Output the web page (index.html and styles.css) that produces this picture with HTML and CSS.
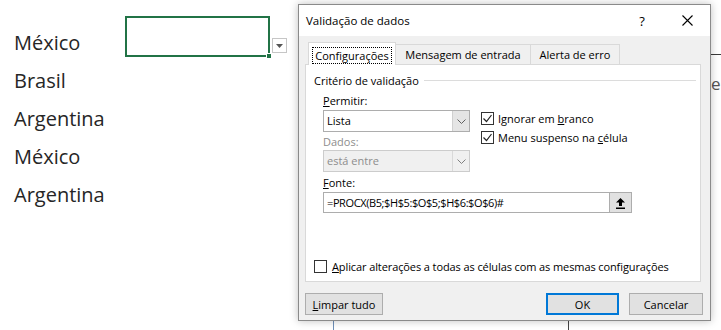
FILE: index.html
```html
<!DOCTYPE html>
<html lang="pt-BR">
<head>
    <meta charset="UTF-8">
    <meta name="viewport" content="width=device-width, initial-scale=1.0">
    <title>Validação de dados</title>
    <link rel="stylesheet" href="styles.css">
</head>
<body>
    <div class="screen">
        <div class="sheet">
            <ul class="names">
                <li>México</li>
                <li>Brasil</li>
                <li>Argentina</li>
                <li>México</li>
                <li>Argentina</li>
            </ul>
            <div class="cell-wrap">
                <div class="cell-active"><span class="fill-handle"></span></div>
                <span class="cell-drop">
                    <svg width="7" height="4" viewBox="0 0 7 4"><polygon points="0,0 7,0 3.5,4" fill="#555"/></svg>
                </span>
            </div>
        </div>

        <!-- bits of the sheet that peek out around the dialog -->
        <div class="behind">
            <span class="rule-h"></span>
            <span class="peek">e</span>
            <span class="rule-v v1"></span>
            <span class="rule-v v2"></span>
        </div>

        <section class="dialog">
            <header class="titlebar">
                <span class="title">Validação de dados</span>
                <span class="help">?</span>
                <span class="close">
                    <svg width="11" height="11" viewBox="0 0 11 11"><path d="M0.5 0.5 L10.5 10.5 M10.5 0.5 L0.5 10.5" stroke="#000" stroke-width="1.1"/></svg>
                </span>
            </header>

            <div class="dialog-body">
                <nav class="tabs">
                    <span class="tab tab-1 active"><span class="focus">Configurações</span></span>
                    <span class="tab tab-2">Mensagem de entrada</span>
                    <span class="tab tab-3">Alerta de erro</span>
                </nav>

                <div class="panel">
                    <div class="group-title"><span>Critério de validação</span></div>

                    <div class="criteria">
                        <div class="col-left">
                            <label class="field-label"><u>P</u>ermitir:</label>
                            <div class="select">
                                <span class="value">Lista</span>
                                <span class="arrow">
                                    <svg width="9" height="5" viewBox="0 0 9 5"><polyline points="0.5,0.5 4.5,4.5 8.5,0.5" fill="none" stroke="#606060"/></svg>
                                </span>
                            </div>
                            <label class="field-label disabled">Dados:</label>
                            <div class="select disabled">
                                <span class="value">está entre</span>
                                <span class="arrow">
                                    <svg width="9" height="5" viewBox="0 0 9 5"><polyline points="0.5,0.5 4.5,4.5 8.5,0.5" fill="none" stroke="#808080"/></svg>
                                </span>
                            </div>
                        </div>
                        <div class="col-right">
                            <div class="check">
                                <span class="box"><svg width="11" height="11" viewBox="0 0 11 11"><polyline points="1.5,5.5 4.5,8.5 9.5,2" fill="none" stroke="#222" stroke-width="1.2"/></svg></span>
                                <span>Ignorar em <u>b</u>ranco</span>
                            </div>
                            <div class="check">
                                <span class="box"><svg width="11" height="11" viewBox="0 0 11 11"><polyline points="1.5,5.5 4.5,8.5 9.5,2" fill="none" stroke="#222" stroke-width="1.2"/></svg></span>
                                <span>Menu suspenso na <u>c</u>élula</span>
                            </div>
                        </div>
                    </div>

                    <label class="field-label source-label"><u>F</u>onte:</label>
                    <div class="source">
                        <span class="value">=PROCX(B5;$H$5:$O$5;$H$6:$O$6)#</span>
                        <span class="pick">
                            <svg width="11" height="12" viewBox="0 0 11 12"><path d="M5.5 1 L10 5.5 H7 V9 H4 V5.5 H1 Z" fill="#000"/><rect x="1" y="10.5" width="9" height="1.5" fill="#000"/></svg>
                        </span>
                    </div>

                    <div class="check apply">
                        <span class="box"></span>
                        <span class="apply-text"><u>A</u>plicar alterações a todas as células com as mesmas configurações</span>
                    </div>
                </div>

                <footer class="buttons">
                    <button class="btn btn-clear"><u>L</u>impar tudo</button>
                    <button class="btn btn-ok">OK</button>
                    <button class="btn btn-cancel">Cancelar</button>
                </footer>
            </div>
        </section>
    </div>
</body>
</html>
```

FILE: styles.css
```css
* {
    box-sizing: border-box;
}

body {
    margin: 0;
    width: 721px;
    height: 330px;
    overflow: hidden;
    background: #fff;
    font-family: "Open Sans", "Noto Sans", sans-serif;
}

.screen {
    position: relative;
    width: 721px;
    height: 330px;
}

/* spreadsheet */

.sheet {
    display: flex;
    align-items: flex-start;
}

.names {
    list-style: none;
    margin: 0;
    padding: 24px 0 0 14px;
    width: 125px;
    font-size: 20px;
    color: #262626;
}

.names li {
    height: 38px;
    line-height: 38px;
    white-space: nowrap;
}

.cell-wrap {
    display: flex;
    align-items: flex-start;
}

.cell-active {
    position: relative;
    width: 145px;
    height: 41px;
    margin-top: 16px;
    border: 2px solid #217346;
}

.fill-handle {
    position: absolute;
    right: -4px;
    bottom: -4px;
    width: 6px;
    height: 6px;
    background: #217346;
    border: 1px solid #fff;
}

.cell-drop {
    width: 15px;
    height: 15px;
    margin: 38px 0 0 2px;
    border: 1px solid #c6c6c6;
    background: #fff;
    display: flex;
    align-items: center;
    justify-content: center;
}

.behind span {
    position: absolute;
}

.rule-h {
    left: 711px;
    top: 54px;
    width: 10px;
    height: 1px;
    background: #3a3a3a;
}

.peek {
    left: 711px;
    top: 72px;
    font-size: 17px;
    color: #555;
}

.rule-v {
    top: 321px;
    width: 1px;
    height: 9px;
}

.v1 {
    left: 333px;
    background: #6d8fb8;
}

.v2 {
    left: 568px;
    background: #444;
}

/* dialog */

.dialog {
    position: absolute;
    left: 298px;
    top: 4px;
    width: 413px;
    height: 317px;
    border: 1px solid #8a8a8a;
    background: #f0f0f0;
    box-shadow: 0 0 8px rgba(0, 0, 0, 0.25);
    display: flex;
    flex-direction: column;
    font-size: 11px;
    color: #000;
}

.titlebar {
    height: 31px;
    background: #fff;
    display: flex;
    align-items: center;
    padding: 0 8px 0 7px;
}

.title {
    flex: 1;
    font-size: 11.5px;
}

.help {
    width: 28px;
    margin-right: 16px;
    text-align: center;
    font-size: 13px;
}

.close {
    width: 30px;
    display: flex;
    justify-content: center;
}

.dialog-body {
    flex: 1;
    padding: 6px 7px 5px 6px;
    display: flex;
    flex-direction: column;
}

.tabs {
    display: flex;
    align-items: flex-end;
    height: 22px;
    padding-left: 3px;
    position: relative;
    z-index: 1;
}

.tab {
    height: 20px;
    border: 1px solid #d9d9d9;
    border-bottom: none;
    background: #f0f0f0;
    display: flex;
    align-items: center;
    justify-content: center;
    white-space: nowrap;
}

.tab + .tab {
    border-left: none;
}

.tab.active {
    height: 23px;
    margin-bottom: -1px;
    background: #fff;
}

.tab-1 { width: 88px; }
.tab-2 { width: 135px; }
.tab-3 { width: 89px; }

.focus {
    height: 17px;
    line-height: 15px;
    padding: 0 2px;
    border: 1px dotted #000;
    margin-top: 2px;
}

.panel {
    width: 396px;
    height: 218px;
    background: #fff;
    border: 1px solid #d9d9d9;
    display: flex;
    flex-direction: column;
    padding: 8px 4px 7px 8px;
}

.group-title {
    display: flex;
    align-items: center;
    height: 16px;
    line-height: 16px;
}

.group-title::after {
    content: "";
    flex: 1;
    height: 1px;
    margin: 0 0 1px 5px;
    background: #dcdcdc;
}

.criteria {
    display: flex;
    margin: 4px 0 0 9px;
}

.col-left {
    width: 147px;
}

.field-label {
    display: block;
    line-height: 16px;
}

.field-label.disabled {
    margin-top: 2px;
    color: #8d8d8d;
}

.select {
    display: flex;
    height: 22px;
    margin-top: 1px;
    border: 1px solid #adadad;
    background: #fff;
}

.select .value {
    flex: 1;
    padding-left: 3px;
    line-height: 20px;
}

.select .arrow {
    width: 17px;
    border-left: 1px solid #d0d0d0;
    background: #e5e5e5;
    display: flex;
    align-items: center;
    justify-content: center;
}

.select.disabled {
    margin-top: 0;
    border-color: #cccccc;
    background: #f0f0f0;
    color: #8d8d8d;
}

.select.disabled .arrow {
    background: #f0f0f0;
    border-left-color: #d9d9d9;
}

.col-right {
    margin-left: 11px;
    padding-top: 17px;
    display: flex;
    flex-direction: column;
    gap: 3px;
}

.check {
    display: flex;
    align-items: center;
    height: 16px;
    white-space: nowrap;
}

.box {
    width: 13px;
    height: 13px;
    margin-right: 4px;
    border: 1px solid #333;
    background: #fff;
    display: flex;
    align-items: center;
    justify-content: center;
}

.source-label {
    margin: 3px 0 0 9px;
}

.source {
    display: flex;
    width: 309px;
    height: 21px;
    margin: 1px 0 0 9px;
    border: 1px solid #adadad;
    background: #fff;
}

.source .value {
    flex: 1;
    padding-left: 3px;
    line-height: 19px;
    white-space: nowrap;
    letter-spacing: -0.4px;
}

.pick {
    width: 22px;
    border-left: 1px solid #adadad;
    background: #e1e1e1;
    display: flex;
    align-items: center;
    justify-content: center;
}

.apply {
    margin-top: auto;
}

.apply .box {
    margin-right: 5px;
}

.apply-text {
    letter-spacing: -0.1px;
}

.buttons {
    display: flex;
    gap: 10px;
    margin-top: 11px;
}

.btn {
    height: 22px;
    padding: 0;
    border: 1px solid #adadad;
    background: #e1e1e1;
    font: inherit;
    color: #000;
    display: flex;
    align-items: center;
    justify-content: center;
}

.btn-clear {
    width: 78px;
    margin-right: auto;
}

.btn-ok {
    width: 73px;
    border: 2px solid #0078d7;
}

.btn-cancel {
    width: 74px;
}
```
